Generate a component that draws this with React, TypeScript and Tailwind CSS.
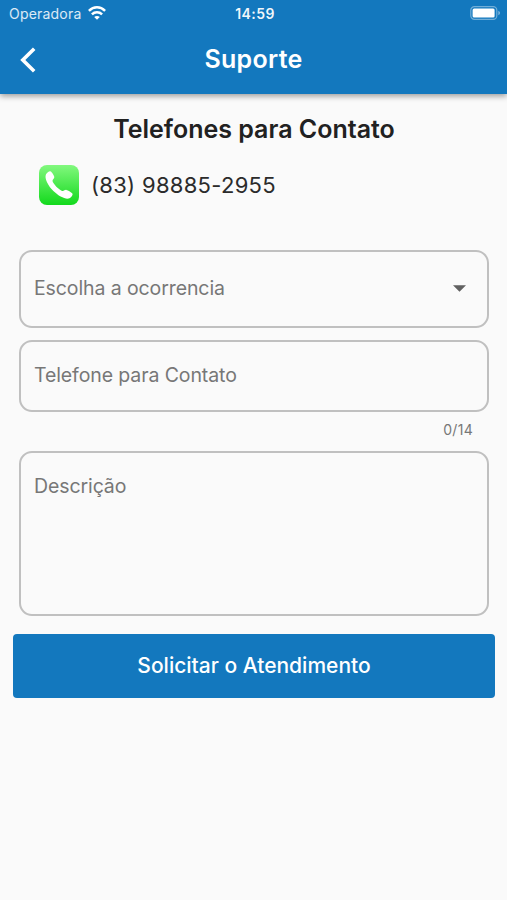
import React from 'react';

function StatusBar() {
  return (
    <div className="flex h-7 items-center justify-between pl-[9px] pr-[6px] text-sm leading-none">
      <div className="flex flex-1 items-center gap-[7px]">
        <span className="text-sm leading-none tracking-[0.2px] text-white/85">Operadora</span>
        <svg width="18" height="14" viewBox="0 0 18 14" className="-mt-0.5" fill="none" stroke="white" strokeWidth="2.5">
          <path d="M0.9 4.8C5.6 0.2 12.4 0.2 17.1 4.8" />
          <path d="M3.9 8.3C6.8 5.5 11.2 5.5 14.1 8.3" />
          <path d="M9 13.8L6.2 11C7.8 9.6 10.2 9.6 11.8 11Z" fill="white" stroke="none" />
        </svg>
      </div>
      <span className="font-semibold tracking-[0.4px] text-white/95">14:59</span>
      <div className="flex flex-1 justify-end">
        <svg width="31" height="14" viewBox="0 0 31 14" className="-mt-0.5" fill="none">
          <rect x="0.8" y="0.7" width="26" height="12.6" rx="3.6" stroke="white" strokeOpacity="0.4" strokeWidth="1.2" />
          <rect x="2.6" y="2.5" width="22" height="9" rx="1.5" fill="white" />
          <path d="M28.3 4.8C30.6 5.6 30.6 8.4 28.3 9.2Z" fill="white" fillOpacity="0.45" />
        </svg>
      </div>
    </div>
  );
}

function PhoneIcon() {
  return (
    <svg width="40" height="40" viewBox="0 0 40 40">
      <defs>
        <linearGradient id="phoneBg" x1="0" y1="0" x2="0" y2="1">
          <stop offset="0" stopColor="#82f87e" />
          <stop offset="1" stopColor="#12d91c" />
        </linearGradient>
      </defs>
      <rect width="40" height="40" rx="8" fill="url(#phoneBg)" />
      <path
        d="M7 9.2C8 7.6 10.3 5.8 11.7 6.4C13 7 15 10.4 15.3 11.9C15.6 13.5 13.2 14.4 13.5 16C14.1 18.8 20 25 23.1 25.9C24.8 26.4 25.8 24.6 27.4 24.9C29.1 25.3 32.9 27.4 33.5 28.8C34.1 30.3 31.7 33 29.8 33.5C26 34.4 19.6 31.2 14.4 26.1C9.3 21 5 13.2 7 9.2Z"
        fill="white"
      />
    </svg>
  );
}

export default function App() {
  return (
    <div className="min-h-screen bg-[#fafafa] font-['Inter',sans-serif] text-[#212121]">
      <header className="h-[94px] bg-[#1378be] text-white shadow-[0_2px_6px_rgba(0,0,0,0.4)]">
        <StatusBar />
        <div className="flex h-16 items-center px-5">
          <button type="button" aria-label="Voltar" className="flex w-10">
            <svg width="16" height="26" viewBox="0 0 16 26" fill="none" stroke="white" strokeWidth="3.6">
              <path d="M14.2 1.8L2.8 13L14.2 24.2" />
            </svg>
          </button>
          <h1 className="-mt-0.5 flex-1 text-center text-[25px] leading-8 font-semibold tracking-[0.3px]">Suporte</h1>
          <div className="w-10" />
        </div>
      </header>

      <main className="flex flex-col pl-[13px] pr-3 pt-[19px]">
        <h2 className="text-center text-[25px] leading-8 font-semibold">Telefones para Contato</h2>
        <div className="mt-5 flex items-center gap-3 pl-[26px]">
          <PhoneIcon />
          <span className="text-[22px] tracking-[0.3px] text-[#2b2b2b]">(83) 98885-2955</span>
        </div>

        <form className="mt-[45px] flex flex-col">
          <div className="mx-1.5 flex flex-col text-[19.5px] tracking-[-0.1px] text-[#777777]">
            <button
              type="button"
              className="flex h-[78px] items-center justify-between rounded-[13px] border-2 border-[#c0c0c0] pl-[13px] pr-[21px]"
            >
              <span>Escolha a ocorrencia</span>
              <svg width="13" height="7" viewBox="0 0 13 7" className="-mt-0.5" fill="#616161">
                <path d="M0 0.3H13L6.5 6.8Z" />
              </svg>
            </button>
            <div className="mt-3 flex h-[72px] items-center rounded-[13px] border-2 border-[#c0c0c0] px-[13px]">
              <span>Telefone para Contato</span>
            </div>
            <span className="mt-2 pr-4 text-right text-sm leading-5 tracking-[0.3px]">0/14</span>
            <div className="mt-[11px] h-[165px] rounded-[13px] border-2 border-[#c0c0c0] px-[13px] pt-[19px]">
              <span>Descrição</span>
            </div>
          </div>
          <button type="button" className="mt-[18px] h-16 rounded bg-[#1378be] text-[21px] font-medium text-white">
            Solicitar o Atendimento
          </button>
        </form>
      </main>
    </div>
  );
}
